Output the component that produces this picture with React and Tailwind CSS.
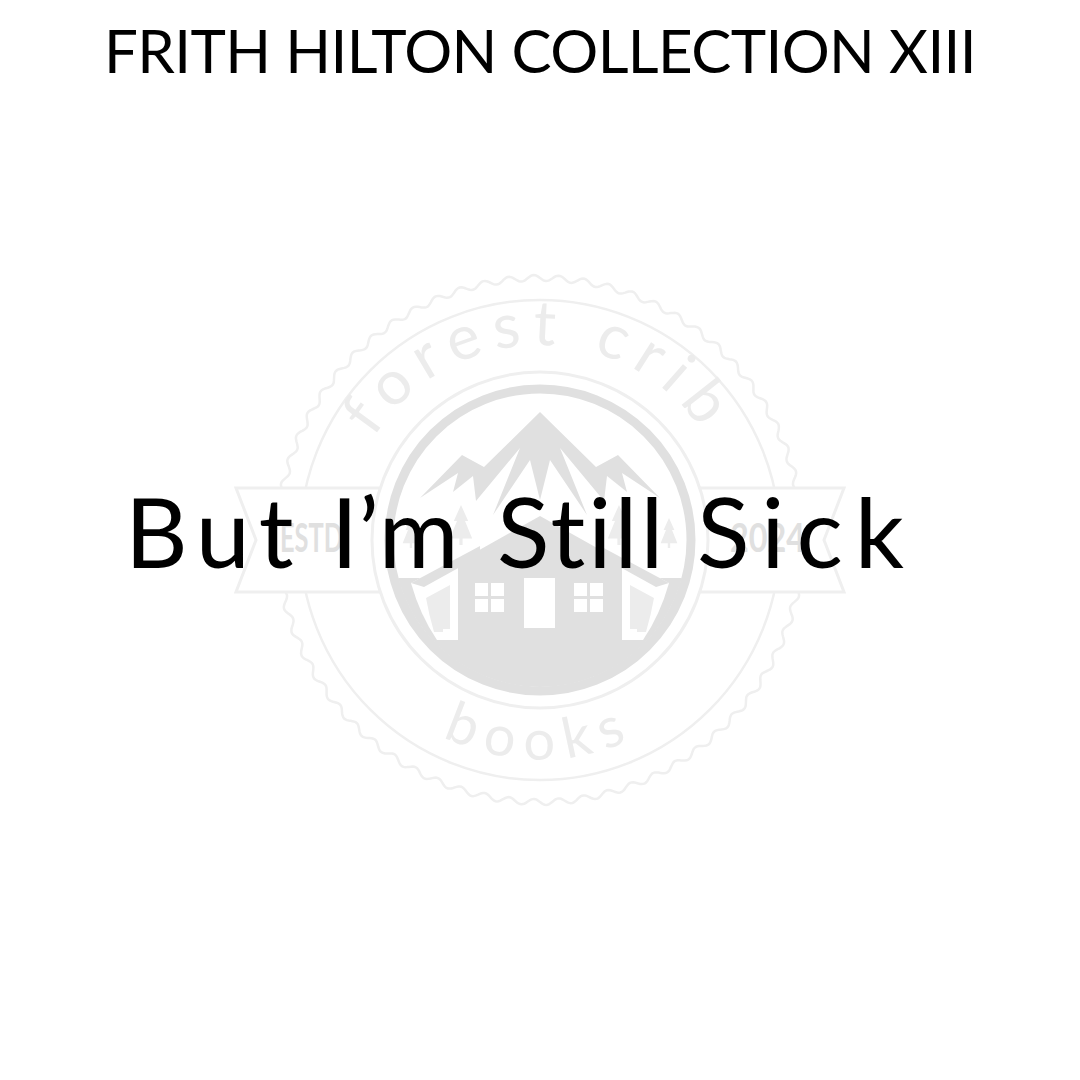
const LINE = "#efefef";
const FILL = "#e0e0e0";
const SOFT = "#ececec";

// wavy seal edge, cut by the ribbon further down
function sealPath(cx, cy, r, amp, bumps) {
  const pts = [];
  for (let i = 0; i <= 1080; i++) {
    const a = (i / 1080) * Math.PI * 2;
    const rr = r + amp * Math.sin(a * bumps);
    pts.push(`${i === 0 ? "M" : "L"}${(cx + rr * Math.cos(a)).toFixed(1)} ${(cy + rr * Math.sin(a)).toFixed(1)}`);
  }
  return pts.join(" ") + " Z";
}

function Window({ x }) {
  return (
    <g fill="#fff">
      <rect x={x} y={583} width={13} height={13} />
      <rect x={x + 16} y={583} width={13} height={13} />
      <rect x={x} y={599} width={13} height={13} />
      <rect x={x + 16} y={599} width={13} height={13} />
    </g>
  );
}

function Tree({ x, y, s = 1 }) {
  return (
    <polygon
      fill={SOFT}
      points={`${x},${y} ${x + 9 * s},${y + 20 * s} ${x + 5 * s},${y + 20 * s} ${x + 14 * s},${y + 42 * s} ${x + 2 * s},${y + 42 * s} ${x + 2 * s},${y + 50 * s} ${x - 2 * s},${y + 50 * s} ${x - 2 * s},${y + 42 * s} ${x - 14 * s},${y + 42 * s} ${x - 5 * s},${y + 20 * s} ${x - 9 * s},${y + 20 * s}`}
    />
  );
}

// one side of the cabin: eave, white trim and the pale wedge under it
function Eave() {
  return (
    <g>
      <path d="M411 583 L470 552 L470 640 L437 640 Q420 615 411 583 Z" fill="#fff" />
      <path d="M426 598 L450 585 L450 629 L443 629 L443 632 L434 632 Q429 615 426 598 Z" fill={SOFT} />
      <polygon points="411,583 480,546 480,556 424,587" fill={FILL} />
    </g>
  );
}

function Badge() {
  return (
    <svg viewBox="0 0 1080 1080" className="h-full w-full" fontFamily="Lato, sans-serif">
      <defs>
        <clipPath id="disc">
          <circle cx="540" cy="540" r="147" />
        </clipPath>
        <path id="arcTop" d="M 345 540 A 195 195 0 0 1 735 540" />
        <path id="arcBottom" d="M 330 600 A 218 218 0 0 0 750 600" />
      </defs>

      <path d={sealPath(540, 540, 262, 3, 66)} fill="none" stroke={LINE} strokeWidth="2.5" />
      <circle cx="540" cy="540" r="240" fill="none" stroke={LINE} strokeWidth="2.5" />

      <text fontSize="62" fill={SOFT} letterSpacing="11">
        <textPath href="#arcTop" startOffset="50%" textAnchor="middle">forest crib</textPath>
      </text>
      <text fontSize="56" fill={SOFT} letterSpacing="11">
        <textPath href="#arcBottom" startOffset="50%" textAnchor="middle">books</textPath>
      </text>

      {/* ribbon */}
      <polygon points="380,488 236,488 256,540 236,592 380,592" fill="#fff" stroke={LINE} strokeWidth="3" />
      <polygon points="700,488 844,488 824,540 844,592 700,592" fill="#fff" stroke={LINE} strokeWidth="3" />
      <text x="280" y="552" fontSize="40" fontWeight="700" fill={FILL} textLength="63" lengthAdjust="spacingAndGlyphs">ESTD</text>
      <text x="730" y="552" fontSize="40" fontWeight="700" fill={FILL} textLength="75" lengthAdjust="spacingAndGlyphs">2024</text>

      {/* round emblem */}
      <circle cx="540" cy="540" r="168" fill="#fff" stroke={LINE} strokeWidth="3" />
      <circle cx="540" cy="540" r="151" fill="none" stroke={FILL} strokeWidth="9" />

      <g clipPath="url(#disc)">
        <Tree x={461} y={505} s={0.8} />
        <Tree x={619} y={505} s={0.8} />
        <Tree x={411} y={518} s={0.6} />
        <Tree x={669} y={518} s={0.6} />

        <rect x="385" y="578" width="310" height="120" fill={FILL} />
        <Eave />
        <g transform="matrix(-1 0 0 1 1080 0)">
          <Eave />
        </g>

        {/* cabin */}
        <polygon fill={FILL} points="540,516 622,562 622,642 458,642 458,562" />
        <Window x={475} />
        <Window x={574} />
        <rect x="524" y="578" width="31" height="50" fill="#fff" />
      </g>

      {/* mountains */}
      <polygon
        fill={FILL}
        points="540,412 596,467 618,455 660,498 622,473 627,492 607,476 604,501 560,448 587,515 550,460 540,500 530,460 493,515 520,448 476,501 473,476 453,492 458,473 420,498 462,455 484,467"
      />
    </svg>
  );
}

export default function App() {
  return (
    <div className="relative h-[1080px] w-[1080px] overflow-hidden bg-white font-['Lato',sans-serif] text-black">
      <div className="pointer-events-none absolute inset-0">
        <Badge />
      </div>
      <div className="relative flex h-full flex-col">
        <h1 className="pt-[5px] text-center text-[60px] leading-[90px] font-normal tracking-[-0.6px]">
          FRITH HILTON COLLECTION XIII
        </h1>
        <p className="mt-[376px] flex whitespace-nowrap pl-[125px] text-[97px] leading-[120px]">
          <span className="w-[206px] tracking-[9px]">But</span>
          <span className="w-[166px] tracking-[0px]">I’m</span>
          <span className="w-[200px] tracking-[3px]">Still</span>
          <span className="tracking-[12px]">Sick</span>
        </p>
      </div>
    </div>
  );
}
